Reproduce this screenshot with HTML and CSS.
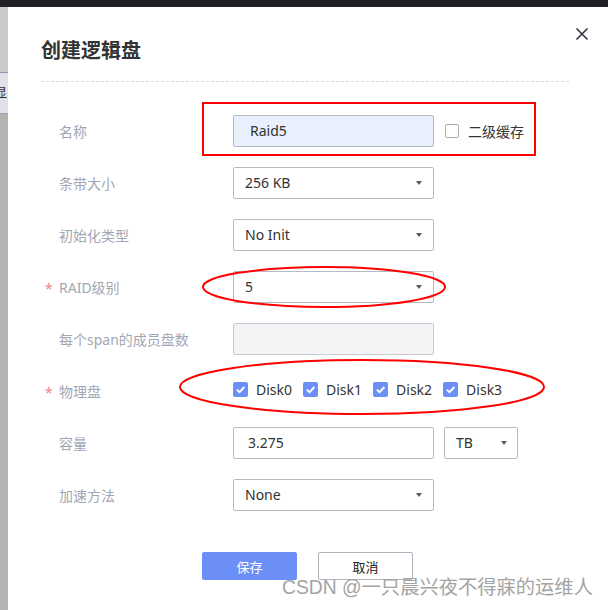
FILE: index.html
```html
<!DOCTYPE html>
<html lang="zh-CN">
<head>
    <meta charset="UTF-8">
    <title>创建逻辑盘</title>
    <link rel="stylesheet" href="styles.css">
</head>
<body>
    <div class="topbar"></div>
    <div class="page">
        <div class="side">
            <div class="side-top"></div>
            <div class="side-mid"><span>显</span></div>
            <div class="side-bottom"></div>
        </div>

        <div class="dialog">
            <button class="close" title="关闭">
                <svg width="14" height="14" viewBox="0 0 14 14">
                    <path d="M1.5 1.5 L12.5 12.5 M12.5 1.5 L1.5 12.5" stroke="#2f3440" stroke-width="1.6" fill="none"/>
                </svg>
            </button>

            <header>创建逻辑盘</header>

            <div class="form">
                <div class="row">
                    <div class="label"><span class="mark"></span>名称</div>
                    <div class="field">
                        <div class="input filled name">Raid5</div>
                        <label class="check">
                            <span class="box"></span>
                            <span>二级缓存</span>
                        </label>
                    </div>
                </div>

                <div class="row">
                    <div class="label"><span class="mark"></span>条带大小</div>
                    <div class="field">
                        <div class="input select"><span>256 KB</span><i class="caret"></i></div>
                    </div>
                </div>

                <div class="row">
                    <div class="label"><span class="mark"></span>初始化类型</div>
                    <div class="field">
                        <div class="input select"><span>No Init</span><i class="caret"></i></div>
                    </div>
                </div>

                <div class="row">
                    <div class="label"><span class="mark">*</span>RAID级别</div>
                    <div class="field">
                        <div class="input select"><span>5</span><i class="caret"></i></div>
                    </div>
                </div>

                <div class="row">
                    <div class="label"><span class="mark"></span>每个span的成员盘数</div>
                    <div class="field">
                        <div class="input disabled"></div>
                    </div>
                </div>

                <div class="row">
                    <div class="label"><span class="mark">*</span>物理盘</div>
                    <div class="field disks">
                        <label class="check on"><span class="box"><svg width="15" height="15" viewBox="0 0 15 15"><path d="M3.8 7.6 L6.5 10.2 L11.4 5" stroke="#fff" stroke-width="1.9" fill="none"/></svg></span><span>Disk0</span></label>
                        <label class="check on"><span class="box"><svg width="15" height="15" viewBox="0 0 15 15"><path d="M3.8 7.6 L6.5 10.2 L11.4 5" stroke="#fff" stroke-width="1.9" fill="none"/></svg></span><span>Disk1</span></label>
                        <label class="check on"><span class="box"><svg width="15" height="15" viewBox="0 0 15 15"><path d="M3.8 7.6 L6.5 10.2 L11.4 5" stroke="#fff" stroke-width="1.9" fill="none"/></svg></span><span>Disk2</span></label>
                        <label class="check on"><span class="box"><svg width="15" height="15" viewBox="0 0 15 15"><path d="M3.8 7.6 L6.5 10.2 L11.4 5" stroke="#fff" stroke-width="1.9" fill="none"/></svg></span><span>Disk3</span></label>
                    </div>
                </div>

                <div class="row">
                    <div class="label"><span class="mark"></span>容量</div>
                    <div class="field">
                        <div class="input capacity">3.275</div>
                        <div class="input select unit"><span>TB</span><i class="caret"></i></div>
                    </div>
                </div>

                <div class="row">
                    <div class="label"><span class="mark"></span>加速方法</div>
                    <div class="field">
                        <div class="input select"><span>None</span><i class="caret"></i></div>
                    </div>
                </div>
            </div>

            <div class="actions">
                <button class="btn primary">保存</button>
                <button class="btn">取消</button>
            </div>
        </div>
    </div>

    <!-- annotation marks drawn on top of the screenshot -->
    <svg class="marks" width="608" height="610" viewBox="0 0 608 610">
        <rect x="203" y="103" width="332" height="52" stroke="#f00" stroke-width="2" fill="none"/>
        <ellipse cx="324" cy="287" rx="121" ry="20" stroke="#f00" stroke-width="2" fill="none"/>
        <ellipse cx="362" cy="387" rx="182" ry="27" stroke="#f00" stroke-width="2" fill="none"/>
    </svg>

    <div class="watermark">CSDN @一只晨兴夜不得寐的运维人</div>
</body>
</html>
```

FILE: styles.css
```css
:root {
    --text: #333;
    --label: #a2a6b3;
    --border: #b6bac5;
    --blue: #6b8ff7;
}

* {
    box-sizing: border-box;
}

body {
    margin: 0;
    width: 608px;
    height: 610px;
    overflow: hidden;
    font-family: "Noto Sans", "Noto Sans CJK SC", sans-serif;
    color: var(--text);
    background: #b5b5b5;
}

.topbar {
    height: 7px;
    background: #1f2025;
}

.page {
    display: flex;
    height: 603px;
}

.side {
    width: 8px;
    display: flex;
    flex-direction: column;
    overflow: hidden;
}

.side-top {
    height: 65px;
    background: #cacaca;
}

.side-mid {
    height: 42px;
    background: #dfe1e6;
    border-top: 1px solid #8d97b4;
    border-bottom: 1px solid #9aa2b8;
    padding-top: 12px;
    overflow: hidden;
}

.side-mid span {
    display: block;
    margin-left: -6px;
    font-size: 13px;
    line-height: 14px;
    color: #333;
}

.side-bottom {
    flex: 1;
    background: #b3b3b3;
}

.dialog {
    flex: 1;
    background: #fff;
    padding: 29px 39px 0 33px;
    position: relative;
}

.close {
    position: absolute;
    top: 20px;
    right: 19px;
    border: 0;
    padding: 0;
    background: none;
    width: 14px;
    height: 14px;
    display: flex;
}

header {
    font-family: "Noto Sans CJK SC", sans-serif;
    font-size: 20px;
    font-weight: bold;
    line-height: 28px;
    color: #333;
    padding-bottom: 17px;
    border-bottom: 1px dashed #d8d8d8;
}

.form {
    margin-top: 33px;
    display: flex;
    flex-direction: column;
    gap: 20px;
}

.row {
    display: grid;
    grid-template-columns: 192px 1fr;
    height: 32px;
    align-items: center;
}

.label {
    display: flex;
    align-items: center;
    font-size: 14px;
    color: var(--label);
    padding-left: 4px;
}

.mark {
    width: 14px;
    color: #f08585;
    font-size: 14px;
    line-height: 14px;
    padding-top: 4px;
}

.field {
    display: flex;
    align-items: center;
}

.input {
    width: 201px;
    height: 32px;
    border: 1px solid var(--border);
    border-radius: 2px;
    background: #fff;
    font-size: 14px;
    line-height: 30px;
    padding: 0 11px;
    color: var(--text);
}

.input.filled {
    background: #e8f0fe;
}

.input.name {
    padding-left: 16px;
}

.input.capacity {
    padding-left: 14px;
}

.input.disabled {
    background: #f4f4f6;
    border-color: #c6cad3;
}

.select {
    display: flex;
    justify-content: space-between;
    align-items: center;
}

.caret {
    width: 0;
    height: 0;
    border-left: 3.5px solid transparent;
    border-right: 3.5px solid transparent;
    border-top: 4px solid #555a66;
}

.unit {
    width: 74px;
    margin-left: 10px;
    padding-right: 10px;
}

.check {
    display: flex;
    align-items: center;
    font-size: 14px;
    color: #333;
    margin-left: 11px;
}

.check .box {
    width: 14px;
    height: 14px;
    border: 1px solid #a9adb8;
    border-radius: 2px;
    margin-right: 9px;
    display: flex;
}

.disks {
    gap: 11px;
    padding-bottom: 3px;
}

.disks .check {
    margin-left: 0;
}

.check.on .box {
    width: 15px;
    height: 15px;
    border: 0;
    background: var(--blue);
    margin-right: 8px;
}

.actions {
    margin-top: 41px;
    padding-left: 161px;
    display: flex;
    gap: 21px;
}

.btn {
    width: 95px;
    height: 28px;
    border: 1px solid #aeb2bc;
    border-radius: 2px;
    background: #fff;
    font-family: "Noto Sans CJK SC", sans-serif;
    font-size: 13px;
    color: #222;
    padding: 0;
}

.btn.primary {
    background: var(--blue);
    border-color: var(--blue);
    color: #fff;
}

.marks {
    position: absolute;
    top: 0;
    left: 0;
    pointer-events: none;
}

.watermark {
    position: absolute;
    left: 282px;
    top: 577px;
    font-family: "Liberation Sans", "Noto Sans CJK SC", sans-serif;
    font-size: 19.3px;
    line-height: 22px;
    color: #a4a4a4;
    white-space: nowrap;
}
```
